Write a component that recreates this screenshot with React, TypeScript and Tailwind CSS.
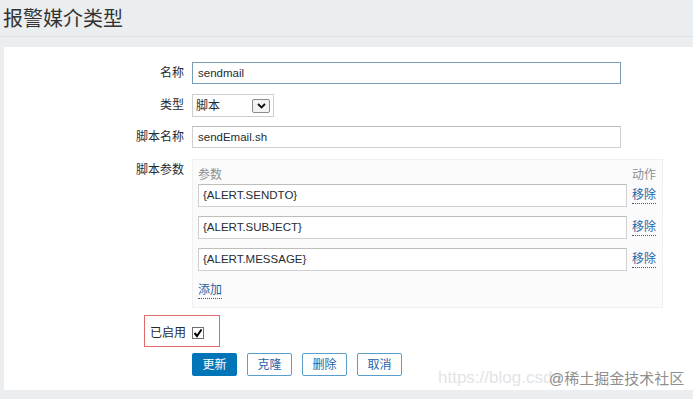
const FONT = { fontFamily: '"Liberation Sans", Arial, "Noto Sans CJK SC", sans-serif' };

const PARAMS = ['{ALERT.SENDTO}', '{ALERT.SUBJECT}', '{ALERT.MESSAGE}'];

function Label({ children }: { children: any }) {
  return <div className="w-[188px] shrink-0 pr-[8px] text-right text-[12px] leading-[22px] text-[#1f2c33]">{children}</div>;
}

function TextBox({ value, focused = false, w = 'w-[429px]' }: { value: string; focused?: boolean; w?: string }) {
  return (
    <div
      className={
        'h-[22px] border px-[5px] text-[11.5px] leading-[20px] text-[#1f2c33] bg-white ' +
        w + ' ' +
        (focused ? 'border-[#7b9dbd]' : 'border-[#cfcfcf] border-t-[#bdbdbd]')
      }
    >
      {value}
    </div>
  );
}

function LinkText({ children }: { children: any }) {
  return <span className="block whitespace-nowrap text-[12px] leading-[16px] text-[#1f65a6] border-b border-dotted border-[#1f65a6]">{children}</span>;
}

export default function App() {
  return (
    <div className="relative w-[693px] h-[399px] overflow-hidden bg-[#ebeef0]" style={FONT}>
      {/* title bar */}
      <div className="h-[37px] border-b border-[#dfe2e5] px-[3px] pt-[6px] text-[20px] leading-[26px] text-[#333]">
        报警媒介类型
      </div>

      {/* form panel */}
      <div className="mt-[10px] ml-[4px] h-[343px] bg-white pt-[15px]">
        <div className="flex">
          <Label>名称</Label>
          <TextBox value="sendmail" focused />
        </div>

        <div className="mt-[10px] flex">
          <Label>类型</Label>
          <div className="flex h-[23px] w-[82px] items-center justify-between border border-[#cfcfcf] pl-[3px] pr-[3px] text-[12px] text-[#1f2c33]">
            <span>脚本</span>
            <span className="flex h-[14px] w-[18px] items-center justify-center rounded-[2px] border border-[#8c8c8c] bg-[#f3f3f3]">
              <svg width="9" height="6" viewBox="0 0 9 6">
                <polyline points="1,1 4.5,4.5 8,1" fill="none" stroke="#111" strokeWidth="1.8" />
              </svg>
            </span>
          </div>
        </div>

        <div className="mt-[9px] flex">
          <Label>脚本名称</Label>
          <TextBox value="sendEmail.sh" />
        </div>

        <div className="mt-[11px] flex">
          <div className="w-[188px] shrink-0 pr-[8px] pt-[2px] text-right text-[12px] leading-[18px] text-[#1f2c33]">脚本参数</div>
          <div className="w-[471px] shrink-0 border border-[#f0f0f0] bg-[#fbfbfb] pl-[5px] pr-[8px] pt-[5px] pb-[8px]">
            <div className="flex h-[19px] items-center text-[12px] text-[#8a8f93]">
              <span className="w-[434px] shrink-0">参数</span>
              <span className="whitespace-nowrap">动作</span>
            </div>
            {PARAMS.map((p, i) => (
              <div key={p} className={'flex h-[23px] items-center ' + (i > 0 ? 'mt-[9px]' : '')}>
                <div className="h-[23px] w-[429px] shrink-0 border border-[#cfcfcf] border-t-[#bdbdbd] bg-white px-[4px] text-[11.5px] leading-[21px] text-[#1f2c33]">
                  {p}
                </div>
                <div className="ml-[5px] flex shrink-0">
                  <LinkText>移除</LinkText>
                </div>
              </div>
            ))}
            <div className="mt-[10px] flex h-[18px] items-center">
              <LinkText>添加</LinkText>
            </div>
          </div>
        </div>

        <div className="relative mt-[17px] flex h-[16px] items-center">
          <div className="w-[188px] shrink-0 pr-[6px] text-right text-[12px] leading-[16px] text-[#1f2c33]">已启用</div>
          <span className="flex h-[12px] w-[12px] items-center justify-center border border-[#707070] bg-white">
            <svg width="10" height="10" viewBox="0 0 10 10">
              <polyline points="1.5,5 4,8 8.5,1.5" fill="none" stroke="#000" strokeWidth="2" />
            </svg>
          </span>
          {/* annotation box */}
          <div className="absolute left-[140px] top-[-10px] h-[32px] w-[76px] border border-[#e36a6a]" />
        </div>

        <div className="mt-[12px] flex gap-[10px] pl-[188px]">
          <div className="flex h-[23px] w-[45px] items-center justify-center rounded-[2px] bg-[#0275b8] text-[12px] text-white">更新</div>
          {['克隆', '删除', '取消'].map(b => (
            <div key={b} className="flex h-[23px] w-[45px] items-center justify-center rounded-[2px] border border-[#5a9fcb] bg-white text-[12px] text-[#1f65a6]">
              {b}
            </div>
          ))}
        </div>
      </div>

      {/* watermark */}
      <div className="absolute left-[438px] top-[367px] text-[17px] leading-[22px] text-[#e2e4e6]">https://blog.csdn</div>
      <div className="absolute left-[549px] top-[369px] text-[15px] leading-[20px] text-[#8e8e8e]">@稀土掘金技术社区</div>
    </div>
  );
}
